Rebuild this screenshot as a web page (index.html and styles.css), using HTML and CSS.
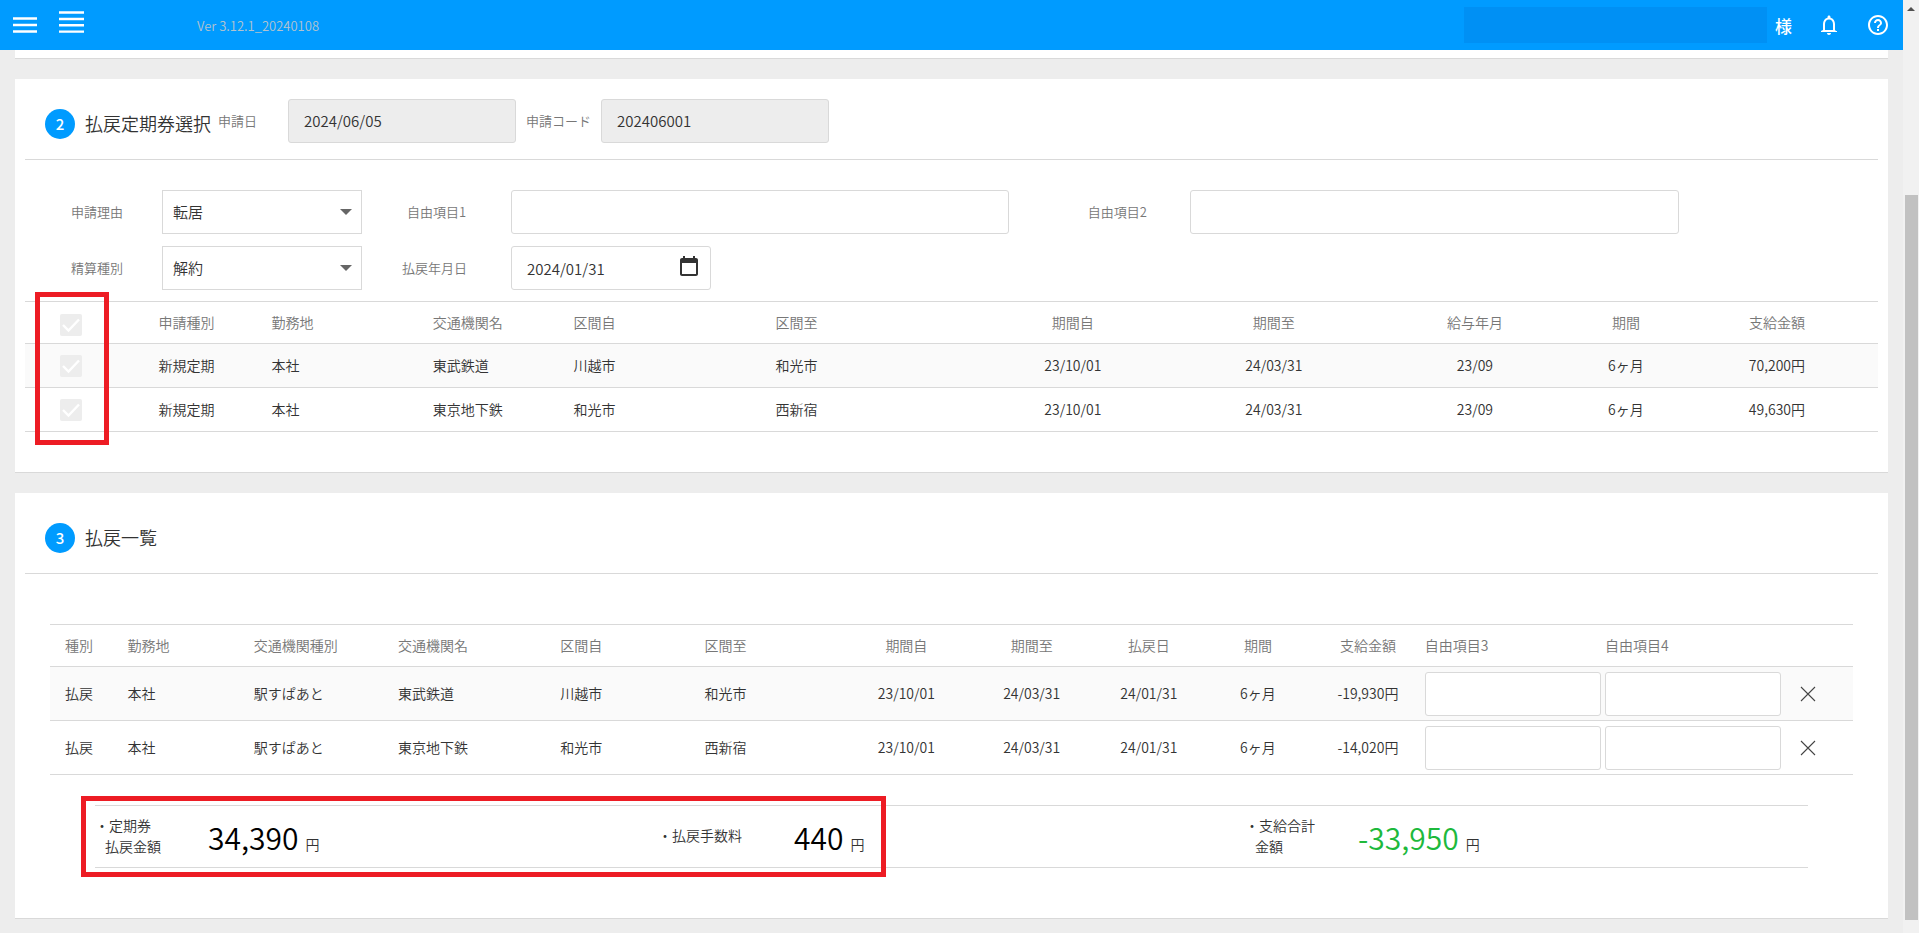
FILE: index.html
```html
<!DOCTYPE html>
<html lang="ja">
<head>
<meta charset="utf-8">
<title>払戻申請</title>
<link rel="stylesheet" href="styles.css">
</head>
<body>
<div class="page">
  <header class="topbar">
    <button class="icon-btn menu-btn" type="button" aria-label="メニュー">
      <svg width="24" height="16" viewBox="0 0 24 16"><path d="M0 1.500h24M0 8h24M0 14.500h24" stroke="#fff" stroke-width="2.400"/></svg>
    </button>
    <button class="icon-btn list-btn" type="button" aria-label="一覧">
      <svg width="25" height="22" viewBox="0 0 25 22"><path d="M0 1.500h25M0 8h25M0 14.300h25M0 20.600h25" stroke="#fff" stroke-width="2.400"/></svg>
    </button>
    <span class="version">Ver 3.12.1_20240108</span>
    <div class="user">
      <span class="user-name"></span>
      <span class="user-suffix">様</span>
    </div>
    <button class="icon-btn bell-btn" type="button" aria-label="通知">
      <svg width="24" height="24" viewBox="0 0 24 24"><path fill="#fff" d="M12 22c1.100 0 2-.9 2-2h-4c0 1.100.9 2 2 2zm7-4-1-1v-6c0-3.070-1.630-5.640-4.500-6.320V4c0-.83-.67-1.500-1.500-1.500s-1.500.67-1.500 1.500v.68C7.640 5.360 6 7.920 6 11v6l-2 1v1h16v-1zm-3-1H8v-6c0-2.480 1.510-4.500 4-4.500s4 2.020 4 4.500v6z"/></svg>
    </button>
    <button class="icon-btn help-btn" type="button" aria-label="ヘルプ">
      <svg width="24" height="24" viewBox="0 0 24 24"><path fill="#fff" d="M11 18h2v-2h-2v2zm1-16C6.480 2 2 6.480 2 12s4.480 10 10 10 10-4.480 10-10S17.520 2 12 2zm0 18c-4.410 0-8-3.590-8-8s3.590-8 8-8 8 3.590 8 8-3.590 8-8 8zm0-14c-2.210 0-4 1.790-4 4h2c0-1.100.9-2 2-2s2 .9 2 2c0 2-3 1.750-3 5h2c0-2.250 3-2.500 3-5 0-2.210-1.790-4-4-4z"/></svg>
    </button>
  </header>

  <main class="content">
    <section class="card card-prev"></section>

    <section class="card">
      <div class="card-head">
        <span class="step">2</span>
        <h2>払戻定期券選択</h2>
        <label class="label head-label" for="apply-date">申請日</label>
        <input class="field head-field" id="apply-date" type="text" value="2024/06/05" disabled>
        <label class="label code-label" for="apply-code">申請コード</label>
        <input class="field head-field" id="apply-code" type="text" value="202406001" disabled>
      </div>

      <div class="form">
        <label class="label" for="reason">申請理由</label>
        <select class="select" id="reason"><option>転居</option></select>
        <label class="label centered" for="free1">自由項目1</label>
        <input class="field" id="free1" type="text">
        <label class="label trailing" for="free2">自由項目2</label>
        <input class="field" id="free2" type="text">

        <label class="label" for="kind">精算種別</label>
        <select class="select" id="kind"><option>解約</option></select>
        <label class="label centered date-label" for="refund-date">払戻年月日</label>
        <div class="date">
          <input class="field" id="refund-date" type="text" value="2024/01/31">
          <svg class="date-icon" width="24" height="24" viewBox="0 0 24 24"><path fill="#333" d="M19 3h-1V1h-2v2H8V1H6v2H5c-1.100 0-2 .9-2 2v14c0 1.100.9 2 2 2h14c1.100 0 2-.9 2-2V5c0-1.100-.9-2-2-2zm0 16H5V8h14v11z"/></svg>
        </div>
      </div>

      <div class="select-area">
        <table class="grid passes">
          <colgroup><col class="p1"><col class="p2"><col class="p3"><col class="p4"><col class="p5"><col class="p6"><col class="p7"><col class="p8"><col class="p9"><col class="p10"><col class="p11"></colgroup>
          <thead>
            <tr><th><input class="check" type="checkbox" aria-label="すべて選択" checked disabled></th><th>申請種別</th><th>勤務地</th><th>交通機関名</th><th>区間自</th><th>区間至</th><th class="mid">期間自</th><th class="mid">期間至</th><th class="mid">給与年月</th><th class="mid">期間</th><th class="mid">支給金額</th></tr>
          </thead>
          <tbody>
            <tr><td><input class="check" type="checkbox" aria-label="東武鉄道" checked disabled></td><td>新規定期</td><td>本社</td><td>東武鉄道</td><td>川越市</td><td>和光市</td><td class="mid">23/10/01</td><td class="mid">24/03/31</td><td class="mid">23/09</td><td class="mid">6ヶ月</td><td class="mid">70,200円</td></tr>
            <tr><td><input class="check" type="checkbox" aria-label="東京地下鉄" checked disabled></td><td>新規定期</td><td>本社</td><td>東京地下鉄</td><td>和光市</td><td>西新宿</td><td class="mid">23/10/01</td><td class="mid">24/03/31</td><td class="mid">23/09</td><td class="mid">6ヶ月</td><td class="mid">49,630円</td></tr>
          </tbody>
        </table>
        <div class="marker marker-checks"></div>
      </div>
    </section>

    <section class="card card-list">
      <div class="card-head">
        <span class="step">3</span>
        <h2>払戻一覧</h2>
      </div>

      <table class="grid refunds">
        <colgroup><col class="r1"><col class="r2"><col class="r3"><col class="r4"><col class="r5"><col class="r6"><col class="r7"><col class="r8"><col class="r9"><col class="r10"><col class="r11"><col class="r12"><col class="r13"><col class="r14"></colgroup>
        <thead>
          <tr><th>種別</th><th>勤務地</th><th>交通機関種別</th><th>交通機関名</th><th>区間自</th><th>区間至</th><th class="mid">期間自</th><th class="mid">期間至</th><th class="mid">払戻日</th><th class="mid">期間</th><th class="mid">支給金額</th><th class="free">自由項目3</th><th class="free">自由項目4</th><th></th></tr>
        </thead>
        <tbody>
          <tr><td>払戻</td><td>本社</td><td>駅すぱあと</td><td>東武鉄道</td><td>川越市</td><td>和光市</td><td class="mid">23/10/01</td><td class="mid">24/03/31</td><td class="mid">24/01/31</td><td class="mid">6ヶ月</td><td class="mid">-19,930円</td><td class="free"><input class="field" type="text" aria-label="自由項目3"></td><td class="free"><input class="field" type="text" aria-label="自由項目4"></td><td class="remove"><button class="icon-btn" type="button" aria-label="削除"><svg width="16" height="16" viewBox="0 0 16 16"><path d="M1 1l14 14M15 1L1 15" stroke="#444" stroke-width="1.100"/></svg></button></td></tr>
          <tr><td>払戻</td><td>本社</td><td>駅すぱあと</td><td>東京地下鉄</td><td>和光市</td><td>西新宿</td><td class="mid">23/10/01</td><td class="mid">24/03/31</td><td class="mid">24/01/31</td><td class="mid">6ヶ月</td><td class="mid">-14,020円</td><td class="free"><input class="field" type="text" aria-label="自由項目3"></td><td class="free"><input class="field" type="text" aria-label="自由項目4"></td><td class="remove"><button class="icon-btn" type="button" aria-label="削除"><svg width="16" height="16" viewBox="0 0 16 16"><path d="M1 1l14 14M15 1L1 15" stroke="#444" stroke-width="1.100"/></svg></button></td></tr>
        </tbody>
      </table>

      <div class="summary">
        <div class="sum-label">・定期券<span class="sum-second">払戻金額</span></div>
        <div class="sum-value"><span class="amount">34,390</span><span class="yen">円</span></div>
        <div class="sum-label">・払戻手数料</div>
        <div class="sum-value"><span class="amount">440</span><span class="yen">円</span></div>
        <div class="sum-label">・支給合計<span class="sum-second">金額</span></div>
        <div class="sum-value"><span class="amount total">-33,950</span><span class="yen">円</span></div>
        <div class="marker marker-sums"></div>
      </div>
    </section>
  </main>
</div>
<div class="scrollbar"><span class="arrow"></span><span class="thumb"></span></div>
</body>
</html>
```
FILE: styles.css
```css
* { box-sizing: border-box; }

body {
  margin: 0;
  height: 100vh;
  display: flex;
  overflow: hidden;
  background: #ededed;
  color: #333;
  font: 350 14px/21px "Noto Sans CJK JP", "Noto Sans", sans-serif;
}

button, input, select { font: inherit; color: inherit; }

.page { flex: 1; min-width: 0; }

.topbar {
  height: 50px;
  display: flex;
  align-items: center;
  padding: 0 13px;
  background: #009bff;
  color: #fff;
}

.icon-btn { display: flex; padding: 0; border: 0; background: none; }
.list-btn { margin: 0 0 6px 22px; }
.version { margin-left: 113px; color: #b4c3ce; font-size: 13px; }
.user { margin-left: auto; display: flex; align-items: center; gap: 8px; }
.user-name { width: 303px; height: 36px; background: #0090f4; }
.user-suffix { font-size: 17px; font-weight: 500; }
.bell-btn { margin-left: 25px; }
.help-btn { margin-left: 25px; }

.content { padding: 0 15px; }

.card {
  margin-bottom: 20px;
  padding: 0 10px;
  background: #fff;
  border-bottom: 1px solid #d9d9d9;
}
.card-prev { height: 9px; }

.card-head {
  height: 81px;
  display: flex;
  align-items: center;
  padding: 9px 20px 0;
  border-bottom: 1px solid #d9d9d9;
}
.step {
  width: 30px;
  height: 30px;
  border-radius: 50%;
  background: #009bff;
  color: #fff;
  font-size: 15px;
  font-weight: 500;
  line-height: 30px;
  text-align: center;
}
h2 { margin: 0 7px 2px 10px; font-size: 18px; font-weight: 350; line-height: 24px; }

.label { color: #777; font-size: 13px; }
.head-label { width: 70px; }
.code-label { width: 75px; margin-left: 10px; }
.head-field { margin-bottom: 6px; }
.card-head .label { margin-bottom: 7px; }

.field {
  display: block;
  width: 100%;
  height: 44px;
  padding: 0 15px;
  border: 1px solid #d9d9d9;
  border-radius: 3px;
  background: #fff;
  font-size: 15px;
}
.field:disabled { background: #ededed; }
.head-field { width: 228px; }

.form {
  display: grid;
  grid-template-columns: 91px 200px 149px 498px 181px 489px;
  row-gap: 12px;
  align-items: center;
  padding: 30px 0 11px 46px;
}
.form .label { padding-bottom: 2px; }
.centered { text-align: center; }
.trailing { padding-right: 43px; text-align: right; }
.date-label { padding-right: 4px; }

.select {
  width: 200px;
  height: 44px;
  padding: 0 10px 2px;
  border: 1px solid #d9d9d9;
  border-radius: 0;
  appearance: none;
  font-size: 15px;
  background: #fff url("data:image/svg+xml,%3Csvg xmlns='http://www.w3.org/2000/svg' width='12' height='6'%3E%3Cpath d='M0 0h12L6 6z' fill='%23666'/%3E%3C/svg%3E") no-repeat right 9px center;
}

.date { position: relative; width: 200px; }
.date-icon { position: absolute; top: 9px; right: 10px; }

.select-area { position: relative; padding-bottom: 40px; }

.grid { width: 100%; table-layout: fixed; border-collapse: collapse; }
.grid th, .grid td {
  padding: 0;
  border-top: 1px solid #d9d9d9;
  border-bottom: 1px solid #d9d9d9;
  font-weight: 350;
  text-align: left;
  white-space: nowrap;
}
.grid th { height: 42px; color: #777; }
.grid td { height: 44px; }
.grid .mid { text-align: center; }
.grid tbody tr:first-child { background: #fafafa; }

.check {
  display: block;
  width: 22px;
  height: 22px;
  margin: 0 0 0 35px;
  appearance: none;
  border-radius: 2px;
  background: #ededed url("data:image/svg+xml,%3Csvg xmlns='http://www.w3.org/2000/svg' width='22' height='22'%3E%3Cpath d='M3 11l5.500 5.500L19 5.500' fill='none' stroke='%23fff' stroke-width='2.400'/%3E%3C/svg%3E");
}
.passes th:first-child { padding-top: 4px; }

.p1 { width: 7.2%; }
.p2 { width: 6.1%; }
.p3 { width: 8.7%; }
.p4 { width: 7.6%; }
.p5, .p7, .p9, .p11 { width: 10.9%; }
.p6 { width: 10.6%; }
.p8 { width: 10.8%; }
.p10 { width: 5.4%; }

.marker { position: absolute; border: 5px solid #ed1c24; }
.marker-checks { top: -9px; left: 10px; width: 74px; height: 153px; }
.marker-sums { top: -10px; left: -14px; width: 805px; height: 81px; }

.refunds { width: calc(100% - 50px); margin: 50px 25px 30px; }
.refunds td { height: 54px; }
.refunds th:first-child, .refunds td:first-child { padding-left: 15px; }
.refunds .free { padding: 0 3px 0 1px; }
.refunds .remove { padding-left: 16px; }

.r1 { width: 4.3%; }
.r2, .r7 { width: 7%; }
.r3, .r5 { width: 8%; }
.r4 { width: 9%; }
.r6 { width: 7.7%; }
.r8 { width: 6.9%; }
.r9 { width: 6.1%; }
.r10 { width: 6%; }
.r11 { width: 6.2%; }
.r12, .r13 { width: 10%; }
.r14 { width: 3.8%; }

.summary {
  position: relative;
  display: grid;
  grid-template-columns: 113fr 450fr 136fr 451fr 113fr 450fr;
  align-items: center;
  height: 63px;
  margin: 0 70px 50px;
  border-top: 1px solid #d9d9d9;
  border-bottom: 1px solid #d9d9d9;
}
.sum-label { padding-bottom: 2px; }
.sum-second { display: block; padding-left: 10px; }
.sum-value { display: flex; align-items: baseline; gap: 7px; }
.amount { color: #000; font-size: 30px; line-height: 40px; }
.total { color: #1db93c; }

.scrollbar {
  width: 16px;
  display: flex;
  flex-direction: column;
  align-items: center;
  padding-top: 7px;
  background: #f1f1f1;
}
.arrow {
  border: 4px solid transparent;
  border-top: 0;
  border-bottom-color: #505050;
}
.thumb { width: 13px; height: 725px; margin-top: 184px; background: #c1c1c1; }
```
